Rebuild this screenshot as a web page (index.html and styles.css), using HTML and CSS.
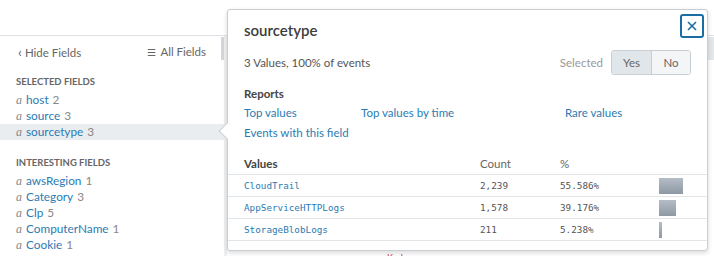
FILE: index.html
```html
<!DOCTYPE html>
<html lang="en">
<head>
    <meta charset="UTF-8">
    <meta name="viewport" content="width=device-width, initial-scale=1.0">
    <title>sourcetype - Fields</title>
    <link rel="stylesheet" href="styles.css">
</head>
<body>

    <div class="page">
        <div class="topbar"></div>

        <div class="main">
            <aside class="sidebar">
                <div class="field-nav">
                    <span class="nav-link"><span class="chev">&lsaquo;</span> Hide Fields</span>
                    <span class="nav-link"><span class="menu-icon">&#9776;</span> All Fields</span>
                </div>

                <h3 class="section-title">Selected Fields</h3>
                <ul class="field-list">
                    <li><i>a</i><span class="name">host</span><span class="num">2</span></li>
                    <li><i>a</i><span class="name">source</span><span class="num">3</span></li>
                    <li class="active"><i>a</i><span class="name">sourcetype</span><span class="num">3</span></li>
                </ul>

                <h3 class="section-title spaced">Interesting Fields</h3>
                <ul class="field-list">
                    <li><i>a</i><span class="name">awsRegion</span><span class="num">1</span></li>
                    <li><i>a</i><span class="name">Category</span><span class="num">3</span></li>
                    <li><i>a</i><span class="name">Clp</span><span class="num">5</span></li>
                    <li><i>a</i><span class="name">ComputerName</span><span class="num">1</span></li>
                    <li><i>a</i><span class="name">Cookie</span><span class="num">1</span></li>
                    <li><i>#</i><span class="name">C-Bytes</span><span class="num">3</span></li>
                </ul>
            </aside>
            <div class="events">
                <div class="event-line">Kerberos</div>
            </div>
        </div>

        <!-- field summary popover -->
        <div class="popover">
            <span class="arrow"></span>
            <button class="close" aria-label="Close">
                <svg width="12" height="12" viewBox="0 0 12 12"><path d="M2 2 L10 10 M10 2 L2 10" stroke="#1a6ea3" stroke-width="1.6" fill="none"/></svg>
            </button>

            <h2 class="pop-title">sourcetype</h2>

            <div class="summary">
                <span>3 Values, 100% of events</span>
                <div class="selected">
                    <span class="sel-label">Selected</span>
                    <div class="toggle">
                        <span class="opt on">Yes</span>
                        <span class="opt">No</span>
                    </div>
                </div>
            </div>

            <div class="reports">
                <h4>Reports</h4>
                <div class="report-links">
                    <a>Top values</a>
                    <a>Top values by time</a>
                    <a>Rare values</a>
                </div>
                <a class="events-link">Events with this field</a>
            </div>

            <table class="values">
                <thead>
                    <tr><th>Values</th><th>Count</th><th>%</th><th></th></tr>
                </thead>
                <tbody>
                    <tr><td class="val">CloudTrail</td><td>2,239</td><td>55.586%</td><td><span class="bar" style="width:24px"></span></td></tr>
                    <tr><td class="val">AppServiceHTTPLogs</td><td>1,578</td><td>39.176%</td><td><span class="bar" style="width:17px"></span></td></tr>
                    <tr><td class="val">StorageBlobLogs</td><td>211</td><td>5.238%</td><td><span class="bar" style="width:3px"></span></td></tr>
                </tbody>
            </table>
        </div>
    </div>

</body>
</html>
```

FILE: styles.css
```css
* {
    box-sizing: border-box;
}

body {
    margin: 0;
    font-family: 'Lato', 'Open Sans', sans-serif;
    font-size: 11.5px;
    color: #555;
    background: #fff;
    overflow: hidden;
}

.page {
    position: relative;
    height: 256px;
    overflow: hidden;
}

.topbar {
    height: 36px;
    border-bottom: 1px solid #dde1e5;
}

.main {
    display: flex;
    height: 220px;
}

.sidebar {
    position: relative;
    width: 227px;
    border-right: 3px solid #eef0f2;
    overflow: hidden;
}

.sidebar::after {
    content: '';
    position: absolute;
    right: 0;
    top: 1px;
    width: 3px;
    height: 23px;
    background: #d3d7db;
}

.field-nav {
    display: flex;
    justify-content: space-between;
    padding: 8px 18px 12px 18px;
    line-height: 16px;
    font-size: 11.5px;
    color: #666;
}

.chev {
    font-size: 14px;
}

.menu-icon {
    font-size: 10px;
    margin-right: 2px;
}

.section-title {
    margin: 0;
    padding-left: 16px;
    line-height: 18px;
    font-size: 9.5px;
    font-weight: 700;
    text-transform: uppercase;
    color: #666;
}

.section-title.spaced {
    margin-top: 14px;
}

.field-list {
    list-style: none;
    margin: 0;
    padding: 1px 0 0;
}

.field-list li {
    padding-left: 16px;
    line-height: 16px;
    font-size: 11.8px;
}

.field-list li.active {
    background: #eaedf0;
}

.field-list i {
    display: inline-block;
    width: 10px;
    font-family: 'Liberation Serif', serif;
    color: #888;
    font-size: 12px;
}

.field-list .name {
    color: #2b7bb4;
}

.field-list .num {
    color: #888;
    margin-left: 4px;
}

.events {
    position: relative;
    flex: 1;
    display: flex;
    align-items: flex-end;
}

.events::after {
    content: '';
    position: absolute;
    right: 0;
    top: 1px;
    width: 6px;
    height: 23px;
    background: #e4e7ea;
}

.event-line {
    padding-left: 160px;
    margin-bottom: -6px;
    line-height: 9px;
    color: #c33;
    font-size: 9px;
}

/* popover */

.popover {
    position: absolute;
    left: 227px;
    top: 9px;
    width: 481px;
    height: 242px;
    background: #fff;
    border: 1px solid #c9ced3;
    border-radius: 3px;
    box-shadow: 0 2px 5px rgba(0, 0, 0, 0.15);
}

.arrow {
    position: absolute;
    left: -7px;
    top: 115px;
    width: 12px;
    height: 12px;
    background: #fff;
    border-left: 1px solid #c9ced3;
    border-bottom: 1px solid #c9ced3;
    transform: rotate(45deg);
}

.close {
    position: absolute;
    top: 4px;
    right: 3px;
    width: 24px;
    height: 24px;
    padding: 0;
    border: 2px solid #1a6ea3;
    border-radius: 3px;
    background: #fff;
    display: flex;
    align-items: center;
    justify-content: center;
}

.pop-title {
    margin: 0;
    padding: 10px 16px 0;
    line-height: 20px;
    font-size: 15px;
    font-weight: 600;
    color: #3c3c3c;
}

.summary {
    display: flex;
    justify-content: space-between;
    align-items: center;
    padding: 10px 16px 0;
}

.selected {
    display: flex;
    align-items: center;
    gap: 8px;
}

.sel-label {
    color: #999;
}

.toggle {
    display: flex;
    border: 1px solid #c8ced4;
    border-radius: 3px;
    overflow: hidden;
}

.opt {
    width: 38px;
    line-height: 23px;
    text-align: center;
    background: #f3f5f6;
    color: #666;
}

.opt.on {
    width: 40px;
    background: #e1e6ea;
    border-right: 1px solid #c8ced4;
}

.reports {
    padding: 10px 16px 0;
}

.reports h4 {
    margin: 0;
    line-height: 18px;
    font-size: 11.5px;
    font-weight: 700;
    color: #444;
}

.report-links {
    display: grid;
    grid-template-columns: 117px 204px auto;
}

.reports a {
    line-height: 20px;
    color: #2b7bb4;
}

.events-link {
    display: block;
}

.values {
    width: 100%;
    margin-top: 11px;
    border-collapse: collapse;
}

.values th {
    text-align: left;
    font-weight: 400;
    color: #666;
    line-height: 20px;
    padding: 0;
}

.values th:first-child {
    font-weight: 700;
    color: #444;
    padding-left: 16px;
}

.values td {
    padding: 0;
    height: 22px;
    border-top: 1px solid #e3e6e9;
    font-family: 'DejaVu Sans Mono', monospace;
    font-size: 9.3px;
    color: #555;
}

.values tr:last-child td {
    border-bottom: 1px solid #e3e6e9;
}

.values td.val {
    padding-left: 16px;
    width: 252px;
    color: #2b7bb4;
}

.values td:nth-child(2) {
    width: 80px;
}

.values td:nth-child(3) {
    width: 99px;
}

.bar {
    display: block;
    height: 16px;
    background: linear-gradient(180deg, #b4bcc6, #8e98a4);
}
```
